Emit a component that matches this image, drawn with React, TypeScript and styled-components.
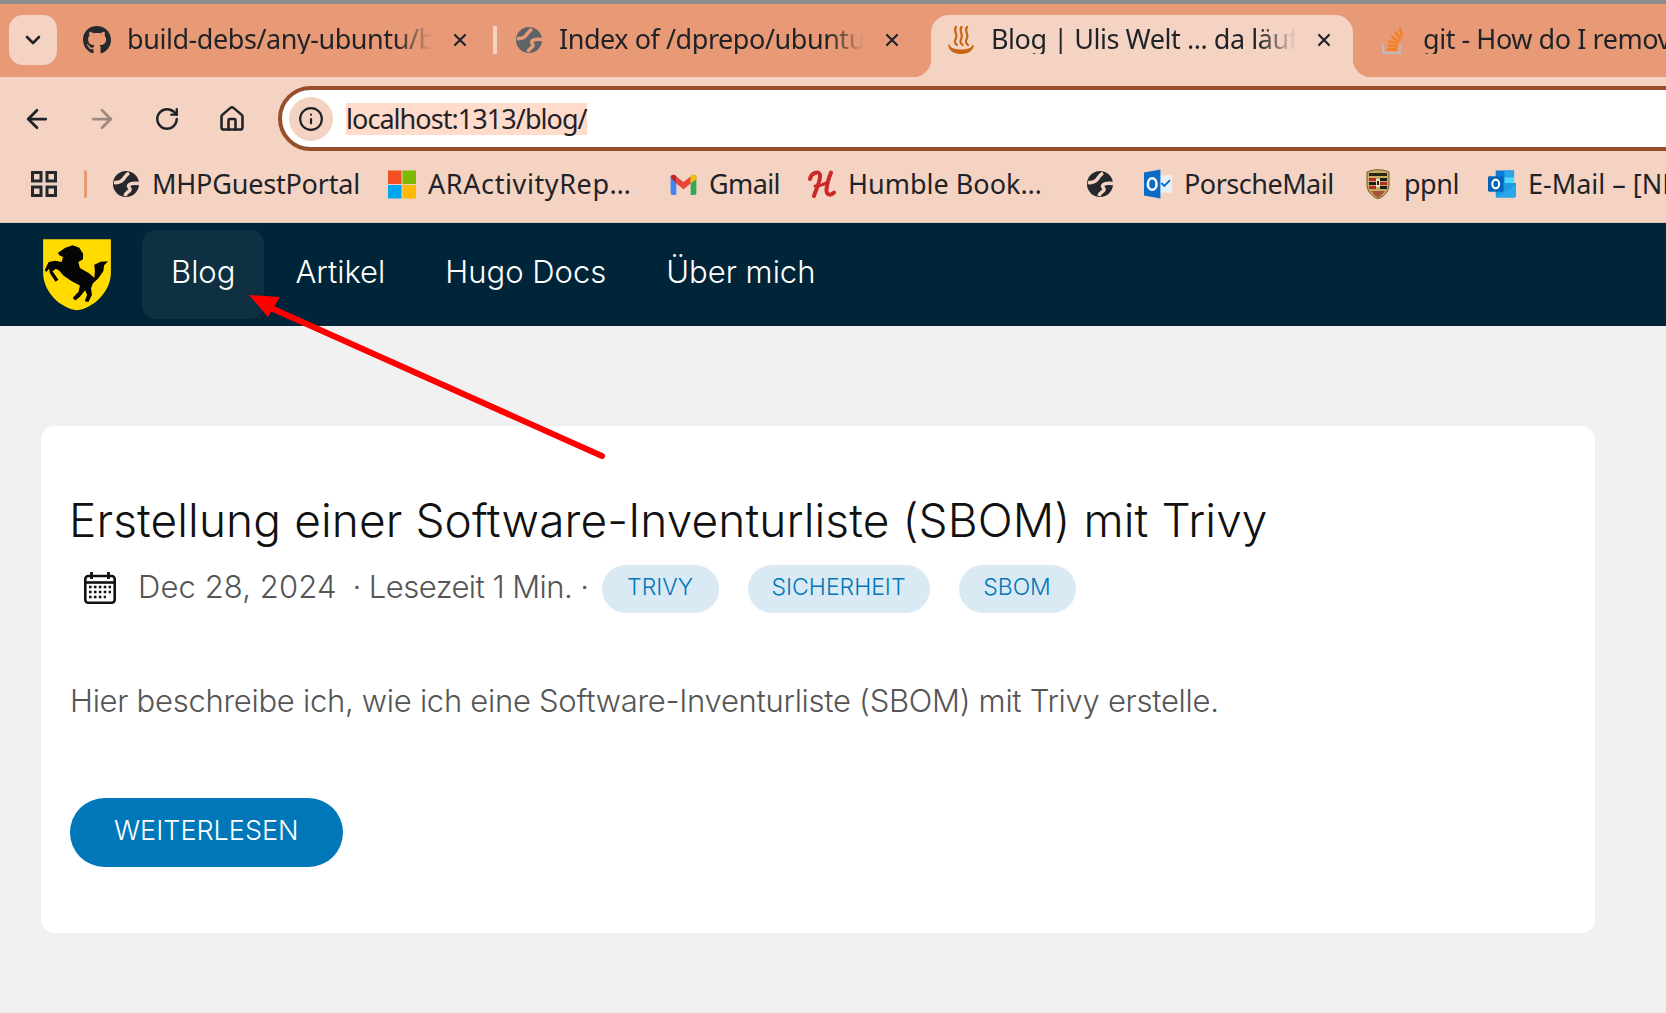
import styled, {createGlobalStyle} from "styled-components";
import {ArrowLeft, ArrowRight, ChevronDown, House, Info, RotateCw, X} from "lucide-react";
import {FaGithub} from "react-icons/fa";
import type {ReactNode} from "react";

const GlobalStyle = createGlobalStyle`
    html, body {
        margin: 0;
        background: #f1f1f1;
        overflow: hidden;
    }
    * {
        box-sizing: border-box;
    }
`

const GlobeIcon = ({color = "#25282c", bg = "#f5d3c3"}: {color?: string; bg?: string}) => (
    <svg width="28" height="28" viewBox="0 0 28 28" fill="none">
        <circle cx="14" cy="14" r="13" fill={color}/>
        <path d="M2 12.500c4 .5 7-.5 9-3s3-5 6-6.500" stroke={bg} strokeWidth="3.600"/>
        <path d="M27 13.500c-4-.5-8-.5-10 1.500s2 3 1 5-4 2-5 6" stroke={bg} strokeWidth="3.400"/>
    </svg>
);

const JavaCupIcon = () => (
    <svg width="28" height="30" viewBox="0 0 28 30" fill="none" stroke="#c9630f" strokeLinecap="round">
        <path d="M9 2C6 6 11 9 9 13s-1 5 1 7" strokeWidth="2.200"/>
        <path d="M14.500 2c-3 4 2 7 0 11s-1 5 1 7" strokeWidth="2.200"/>
        <path d="M20 2c-3 4 2 7 0 11s-1 5 1 7" strokeWidth="2.200"/>
        <path d="M2 20c-1 5 5 8.500 12 8.500S27 25 26 20c-1 3-5 5-12 5S3 23 2 20z" fill="#c9630f" strokeWidth="1"/>
    </svg>
);

const StackIcon = () => (
    <svg width="22" height="30" viewBox="0 0 22 30" fill="none">
        <path d="M1 19v9h17v-9" stroke="#bcbbbb" strokeWidth="2"/>
        <path d="M5 24.500h10M5.500 20.500l10 1M6.500 16l9.500 3M9 11.500l8.500 5.500M13 7l6 7.500M18 3l2 9" stroke="#f48024" strokeWidth="2.400"/>
    </svg>
);

const AppsIcon = () => (
    <svg width="26" height="26" viewBox="0 0 26 26" fill="none" stroke="#25282c" strokeWidth="3">
        <rect x="1.500" y="1.500" width="8.500" height="8.500"/>
        <rect x="16" y="1.500" width="8.500" height="8.500"/>
        <rect x="1.500" y="16" width="8.500" height="8.500"/>
        <rect x="16" y="16" width="8.500" height="8.500"/>
    </svg>
);

const MicrosoftIcon = () => (
    <svg width="29" height="29" viewBox="0 0 29 29">
        <rect width="14" height="14" fill="#f25022"/>
        <rect x="15" width="14" height="14" fill="#7fba00"/>
        <rect y="15" width="14" height="14" fill="#00a4ef"/>
        <rect x="15" y="15" width="14" height="14" fill="#ffb900"/>
    </svg>
);

const GmailIcon = () => (
    <svg width="27" height="21" viewBox="0 0 27 22">
        <path d="M0 3.500C0 1 3 0 5 1.500L6 2.500V22H2a2 2 0 0 1-2-2z" fill="#4285f4"/>
        <path d="M21 2.500L22 1.500C24 0 27 1 27 3.500V20a2 2 0 0 1-2 2h-4z" fill="#34a853"/>
        <path d="M6 2.500L13.500 8.500 21 2.500V10L13.500 16 6 10z" fill="#ea4335"/>
        <path d="M0 3.500L6 10V2.500L5 1.500C3 0 0 1 0 3.500z" fill="#c5221f"/>
        <path d="M21 2.500V10L27 5.500V3.500C27 1 24 0 22 1.500z" fill="#fbbc04"/>
    </svg>
);

const HumbleIcon = () => (
    <svg width="28" height="28" viewBox="0 0 28 28" fill="none" stroke="#cb2a27" strokeLinecap="round">
        <path d="M2 9C3 3 11 0 12 5c.5 7-4 14-6 21" strokeWidth="4"/>
        <path d="M23 2.500c-2 5-4 11-4.500 17-.3 5 3.500 7 7.500 3" strokeWidth="4"/>
        <path d="M7 16c4 0 8-1 12-3.500" strokeWidth="3"/>
    </svg>
);

const OutlookOldIcon = () => (
    <svg width="29" height="30" viewBox="0 0 29 30">
        <rect x="14" y="6" width="15" height="18" fill="#e8f1fa"/>
        <path d="M18 14l3 3 6-6" fill="none" stroke="#0a6cc4" strokeWidth="2"/>
        <path d="M0 3L17 0V30L0 27z" fill="#0a6cc4"/>
        <ellipse cx="8.500" cy="15" rx="4.500" ry="6" fill="none" stroke="#fff" strokeWidth="2.600"/>
    </svg>
);

const OutlookIcon = () => (
    <svg width="29" height="28" viewBox="0 0 29 28">
        <rect x="8" y="0" width="19" height="14" fill="#0f78d4"/>
        <rect x="17" y="0" width="10" height="7" fill="#28a8ea"/>
        <rect x="17" y="7" width="10" height="7" fill="#50d9ff"/>
        <path d="M8 13L29 13V26a2 2 0 0 1-2 2H8z" fill="#1b9de2"/>
        <path d="M8 28L29 15V26a2 2 0 0 1-2 2z" fill="#28a8ea"/>
        <rect x="0" y="6" width="16" height="16" rx="1.500" fill="#0364b8"/>
        <ellipse cx="8" cy="14" rx="3.500" ry="4.500" fill="none" stroke="#fff" strokeWidth="2.200"/>
    </svg>
);

const PorscheIcon = () => (
    <svg width="24" height="30" viewBox="0 0 24 30">
        <path d="M1 3C7 0 17 0 23 3V16C23 23 17 28 12 30 7 28 1 23 1 16z" fill="#c9ab63" stroke="#6d5a2a"/>
        <rect x="3" y="4" width="18" height="3" fill="#2b2519"/>
        <rect x="3" y="9" width="7" height="3" fill="#b02b25"/>
        <rect x="3" y="13" width="7" height="3" fill="#1f1d18"/>
        <rect x="14" y="9" width="7" height="3" fill="#1f1d18"/>
        <rect x="14" y="13" width="7" height="3" fill="#b02b25"/>
        <rect x="14" y="17" width="7" height="3" fill="#1f1d18"/>
        <rect x="3" y="17" width="7" height="3" fill="#b02b25"/>
        <rect x="10" y="10" width="4" height="8" fill="#efe2b8"/>
        <path d="M11 12l2 0 0 4-2 0z" fill="#222"/>
        <path d="M5 22l14 0-3 4-4 3-4-3z" fill="#a8553a"/>
    </svg>
);

const StuttgartLogo = () => (
    <svg width="72" height="73" viewBox="33 24 216 224">
        <path d="M37 28H245V130C245 190 190 240 141 246 90 240 37 190 37 130Z" fill="#ffdb00"/>
        <path d="M82 70L105 54 128 46 148 54 160 72 159 90 145 98 150 116 178 132 194 146 196 126 194 106 214 97 236 95 224 108 222 125 206 148 190 163 184 178 187 198 176 220 165 218 172 198 166 184 150 204 136 216 128 208 146 188 150 170 124 156 100 140 86 124 76 118 66 126 84 152 75 158 58 132 55 118 47 128 42 122 54 98 74 94 94 98 98 82 88 78Z" fill="#050505"/>
    </svg>
);

const CalendarIcon = () => (
    <svg width="32" height="32" viewBox="0 0 32 32" fill="none" stroke="#111">
        <rect x="1.300" y="4" width="29.400" height="26.800" rx="3" strokeWidth="2.600"/>
        <path d="M1 10.500H31" strokeWidth="2.600"/>
        <path d="M7.500 0V7M24.500 0V7" strokeWidth="2.800"/>
        <path d="M5 15H27M5 20H27M5 25H22" strokeWidth="2.600" strokeDasharray="2.600 2.300"/>
    </svg>
);

const Tab = ({icon, title, active, separator}: {icon: ReactNode; title: string; active?: boolean; separator?: boolean}) => (
    <StyledTab $active={active} $separator={separator}>
        <TabIcon>{icon}</TabIcon>
        <TabTitle>{title}</TabTitle>
        <TabClose><X size={20} strokeWidth={2.6}/></TabClose>
    </StyledTab>
);

const Bookmark = ({icon, label, width, spacing = 0}: {icon: ReactNode; label?: string; width?: number; spacing?: number}) => (
    <StyledBookmark>
        <BookmarkIcon>{icon}</BookmarkIcon>
        {label && <BookmarkLabel $width={width} $spacing={spacing}>{label}</BookmarkLabel>}
    </StyledBookmark>
);

export default function App() {
    return (
        <Page>
            <GlobalStyle/>
            <TabStrip>
                <TabSearch><ChevronDown size={24} strokeWidth={2.6}/></TabSearch>
                <Tab icon={<FaGithub size={30} color="#25282c"/>} title="build-debs/any-ubuntu/build-debs" separator/>
                <Tab icon={<GlobeIcon color="#5f6368" bg="#e79a75"/>} title="Index of /dprepo/ubuntu/pool"/>
                <Tab icon={<JavaCupIcon/>} title="Blog | Ulis Welt ... da läuft was" active/>
                <Tab icon={<StackIcon/>} title="git - How do I remove a file"/>
            </TabStrip>
            <Toolbar>
                <NavIcon><ArrowLeft size={30} strokeWidth={2.2}/></NavIcon>
                <NavIcon $disabled><ArrowRight size={30} strokeWidth={2.2}/></NavIcon>
                <NavIcon><RotateCw size={26} strokeWidth={2.2}/></NavIcon>
                <NavIcon><House size={28} strokeWidth={2.2}/></NavIcon>
                <AddressBar>
                    <SiteInfo><Info size={26} strokeWidth={2}/></SiteInfo>
                    <SelectedText>localhost:1313/blog/</SelectedText>
                </AddressBar>
            </Toolbar>
            <BookmarkBar>
                <AppsButton><AppsIcon/></AppsButton>
                <BookmarkDivider/>
                <Bookmark icon={<GlobeIcon/>} label="MHPGuestPortal" width={206} spacing={-0.2}/>
                <Bookmark icon={<MicrosoftIcon/>} label="ARActivityRep…" width={211} spacing={0.6}/>
                <Bookmark icon={<GmailIcon/>} label="Gmail" width={69} spacing={-0.6}/>
                <Bookmark icon={<HumbleIcon/>} label="Humble Book…" width={208}/>
                <Bookmark icon={<GlobeIcon/>}/>
                <Bookmark icon={<OutlookOldIcon/>} label="PorscheMail" width={150} spacing={-0.5}/>
                <Bookmark icon={<PorscheIcon/>} label="ppnl" width={54} spacing={-0.5}/>
                <Bookmark icon={<OutlookIcon/>} label="E-Mail – [NEU]" width={200}/>
            </BookmarkBar>
            <SiteNav>
                <StuttgartLogo/>
                <SiteMenu>
                    <SiteLink $active>Blog</SiteLink>
                    <SiteLink>Artikel</SiteLink>
                    <SiteLink>Hugo Docs</SiteLink>
                    <SiteLink>Über mich</SiteLink>
                </SiteMenu>
            </SiteNav>
            <Content>
                <Card>
                    <PostTitle>Erstellung einer Software-Inventurliste (SBOM) mit Trivy</PostTitle>
                    <Meta>
                        <CalendarWrapper><CalendarIcon/></CalendarWrapper>
                        <MetaText>Dec 28, 2024</MetaText>
                        <MetaInfo>· Lesezeit 1 Min. ·</MetaInfo>
                        <Tags>
                            <TagPill>TRIVY</TagPill>
                            <TagPill>SICHERHEIT</TagPill>
                            <TagPill>SBOM</TagPill>
                        </Tags>
                    </Meta>
                    <Excerpt>Hier beschreibe ich, wie ich eine Software-Inventurliste (SBOM) mit Trivy erstelle.</Excerpt>
                    <ReadMore>WEITERLESEN</ReadMore>
                </Card>
            </Content>
            <Arrow width="1666" height="1013" viewBox="0 0 1666 1013">
                <path d="M602 456L262 304" stroke="#f00" strokeWidth="6" strokeLinecap="round"/>
                <path d="M249 295L280 297 268 317Z" fill="#f00"/>
            </Arrow>
        </Page>
    );
}

const UI_FONT = `"Noto Sans", "Open Sans", sans-serif`
const SITE_FONT = `Inter, "Open Sans", sans-serif`

const Page = styled.div`
    position: relative;
    width: 1666px;
    height: 1013px;
    overflow: hidden;
    background: #f1f1f1;
    font-family: ${UI_FONT};
    color: #1f2328;
`
const TabStrip = styled.div`
    display: flex;
    align-items: flex-start;
    height: 77px;
    padding: 11px 0 0 9px;
    background: #e79a75;
    border-top: 4px solid #8d8d8d;
    overflow: hidden;
`
const TabSearch = styled.div`
    display: flex;
    align-items: center;
    justify-content: center;
    flex: none;
    width: 48px;
    height: 50px;
    margin-right: 10px;
    border-radius: 14px;
    background: #f5d3c3;
`
const StyledTab = styled.div<{$active?: boolean; $separator?: boolean}>`
    position: relative;
    display: flex;
    flex: none;
    align-items: flex-start;
    gap: 14px;
    width: 422px;
    height: 62px;
    margin-right: 10px;
    padding: 10px 15px 0 16px;
    border-radius: 18px 18px 0 0;
    background: ${props => props.$active ? "#f5d3c3" : "transparent"};

    &::before, &::after {
        content: ${props => props.$active ? "''" : "none"};
        position: absolute;
        bottom: 0;
        width: 18px;
        height: 18px;
    }
    &::before {
        left: -18px;
        background: radial-gradient(circle at 0 0, transparent 18px, #f5d3c3 18.500px);
    }
    &::after {
        right: -18px;
        background: radial-gradient(circle at 100% 0, transparent 18px, #f5d3c3 18.500px);
    }
    ${props => props.$separator && `
        &::after {
            content: '';
            right: -8px;
            bottom: auto;
            top: 11px;
            width: 4px;
            height: 28px;
            background: #f5d3c3;
        }
    `}
`
const TabIcon = styled.div`
    display: flex;
    align-items: center;
    justify-content: center;
    flex: none;
    width: 28px;
    height: 30px;
    margin-right: 2px;
`
const TabTitle = styled.div`
    flex: none;
    width: 305px;
    margin-top: -1px;
    overflow: hidden;
    white-space: nowrap;
    font-size: 27px;
    letter-spacing: -0.45px;
    line-height: 30px;
    -webkit-mask-image: linear-gradient(to right, #000 88%, transparent);
    mask-image: linear-gradient(to right, #000 88%, transparent);
`
const TabClose = styled.div`
    display: flex;
    align-items: center;
    justify-content: center;
    flex: none;
    width: 28px;
    height: 30px;
`
const Toolbar = styled.div`
    display: flex;
    align-items: center;
    height: 83px;
    padding: 0 0 0 6px;
    background: #f5d3c3;
`
const NavIcon = styled.div<{$disabled?: boolean}>`
    display: flex;
    align-items: center;
    justify-content: center;
    flex: none;
    width: 62px;
    height: 50px;
    margin-right: 3px;
    color: ${props => props.$disabled ? "#9c8a81" : "#1f2328"};
`
const AddressBar = styled.div`
    display: flex;
    flex: none;
    align-items: center;
    gap: 13px;
    width: 1500px;
    height: 65px;
    margin-left: 12px;
    padding-left: 7px;
    border: 4px solid #964f2a;
    border-radius: 33px;
    background: #fff;
    font-size: 27px;
`
const SiteInfo = styled.div`
    display: flex;
    align-items: center;
    justify-content: center;
    flex: none;
    width: 44px;
    height: 44px;
    border-radius: 50%;
    background: #f5d3c3;
`
const SelectedText = styled.span`
    display: inline-block;
    height: 32px;
    line-height: 32px;
    letter-spacing: -0.95px;
    background: #ffdbcb;
`
const BookmarkBar = styled.div`
    display: flex;
    align-items: center;
    height: 63px;
    padding-bottom: 14px;
    background: #f5d3c3;
    border-bottom: 1px solid #d9c2b6;
    overflow: hidden;
`
const AppsButton = styled.div`
    display: flex;
    flex: none;
    justify-content: center;
    width: 88px;
`
const BookmarkDivider = styled.div`
    flex: none;
    width: 3px;
    height: 28px;
    margin-right: 10px;
    margin-left: -4px;
    border-radius: 2px;
    background: #e79a75;
`
const StyledBookmark = styled.div`
    display: flex;
    flex: none;
    align-items: center;
    gap: 12px;
    padding: 0 15px;
`
const BookmarkIcon = styled.div`
    display: flex;
    align-items: center;
    justify-content: center;
    flex: none;
    width: 28px;
    height: 30px;
`
const BookmarkLabel = styled.div<{$width?: number; $spacing?: number}>`
    width: ${props => props.$width}px;
    white-space: nowrap;
    font-size: 27px;
    letter-spacing: ${props => props.$spacing}px;
    line-height: 32px;
`
const SiteNav = styled.nav`
    display: flex;
    align-items: center;
    height: 103px;
    padding-left: 41px;
    background: #002538;
`
const SiteMenu = styled.div`
    display: flex;
    gap: 2px;
    margin-left: 29px;
`
const SiteLink = styled.a<{$active?: boolean}>`
    display: block;
    height: 89px;
    padding: 0 29px;
    border-radius: 14px;
    background: ${props => props.$active ? "#0f2f42" : "transparent"};
    color: #fff;
    font-family: ${SITE_FONT};
    font-size: 31px;
    font-weight: 300;
    line-height: 83px;
`
const Content = styled.main`
    padding: 100px 71px 0 41px;
`
const Card = styled.article`
    display: flex;
    flex-direction: column;
    align-items: flex-start;
    height: 507px;
    padding: 68px 29px 0;
    border-radius: 14px;
    background: #fff;
`
const PostTitle = styled.h1`
    margin: 0 0 0 -1px;
    color: #111;
    font-family: ${SITE_FONT};
    font-size: 46px;
    font-weight: 300;
    letter-spacing: 0.11px;
    line-height: 52px;
    white-space: nowrap;
`
const Meta = styled.div`
    display: flex;
    align-items: center;
    height: 48px;
    margin-top: 19px;
    font-family: ${SITE_FONT};
    font-size: 31px;
    font-weight: 300;
    color: #555;
`
const CalendarWrapper = styled.div`
    display: flex;
    margin: 0 22px 2px 14px;
`
const MetaText = styled.span`
    padding-bottom: 6px;
    letter-spacing: 0.1px;
    white-space: nowrap;
`
const MetaInfo = styled.span`
    margin-left: 16px;
    padding-bottom: 6px;
    letter-spacing: -0.55px;
    white-space: nowrap;
`
const Tags = styled.div`
    display: flex;
    gap: 29px;
    margin-left: 13px;
`
const TagPill = styled.span`
    min-width: 117px;
    height: 48px;
    padding: 0 24px;
    border-radius: 24px;
    background: #d9eaf4;
    color: #0077b8;
    font-size: 23px;
    line-height: 44px;
    text-align: center;
`
const Excerpt = styled.p`
    margin: 68px 0 0;
    color: #555;
    font-family: ${SITE_FONT};
    font-size: 31px;
    font-weight: 300;
    letter-spacing: -0.28px;
    line-height: 40px;
    white-space: nowrap;
`
const ReadMore = styled.a`
    display: block;
    height: 69px;
    margin-top: 77px;
    padding: 0 44px;
    border-radius: 35px;
    background: #0077b8;
    color: #fff;
    font-family: ${SITE_FONT};
    font-size: 27px;
    font-weight: 300;
    line-height: 65px;
`
const Arrow = styled.svg`
    position: absolute;
    top: 0;
    left: 0;
    pointer-events: none;
`
